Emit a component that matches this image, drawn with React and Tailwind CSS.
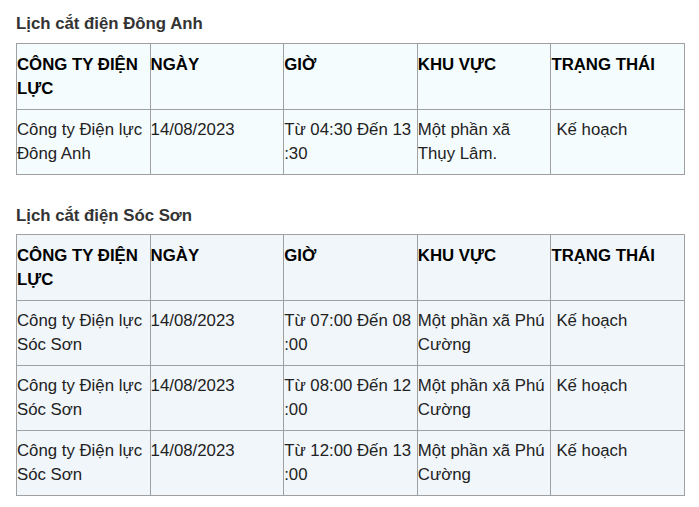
import React from "react";

const head = ["CÔNG TY ĐIỆN LỰC", "NGÀY", "GIỜ", "KHU VỰC", "TRẠNG THÁI"];

function Table({ bg, rows }) {
  return (
    <table className={`w-[669px] table-fixed border-collapse border border-[#a0a0a0] ${bg}`}>
      <thead>
        <tr>
          {head.map((h) => (
            <th key={h} className="border border-[#a0a0a0] text-left align-top font-bold text-black pl-0 pr-px pt-[9px] pb-[8px] leading-[24px]">
              {h}
            </th>
          ))}
        </tr>
      </thead>
      <tbody>
        {rows.map((r, i) => (
          <tr key={i}>
            {r.map((c, j) => (
              <td key={j} className={`border border-[#a0a0a0] align-top text-[#222] pt-[8px] pb-[8px] leading-[24px] ${j === 4 ? "pl-[5px] pr-px" : "pl-0 pr-px"}`}>
                {c}
              </td>
            ))}
          </tr>
        ))}
      </tbody>
    </table>
  );
}

export default function App() {
  return (
    <div className="bg-white w-[699px] h-[507px] pl-[16px] pt-[14px] text-[16.8px] font-['Liberation_Sans',Arial,sans-serif]">
      <div className="text-[16.8px] font-bold text-[#333] leading-[20px] mb-[9px]">Lịch cắt điện Đông Anh</div>
      <Table
        bg="bg-[#f5fcfe]"
        rows={[["Công ty Điện lực Đông Anh", "14/08/2023", "Từ 04:30 Đến 13 :30", "Một phần xã Thụy Lâm.", "Kế hoạch"]]}
      />
      <div className="text-[16.8px] font-bold text-[#333] leading-[20px] mt-[31px] mb-[8px]">Lịch cắt điện Sóc Sơn</div>
      <Table
        bg="bg-[#f1f6fb]"
        rows={[
          ["Công ty Điện lực Sóc Sơn", "14/08/2023", "Từ 07:00 Đến 08 :00", "Một phần xã Phú Cường", "Kế hoạch"],
          ["Công ty Điện lực Sóc Sơn", "14/08/2023", "Từ 08:00 Đến 12 :00", "Một phần xã Phú Cường", "Kế hoạch"],
          ["Công ty Điện lực Sóc Sơn", "14/08/2023", "Từ 12:00 Đến 13 :00", "Một phần xã Phú Cường", "Kế hoạch"],
        ]}
      />
    </div>
  );
}
